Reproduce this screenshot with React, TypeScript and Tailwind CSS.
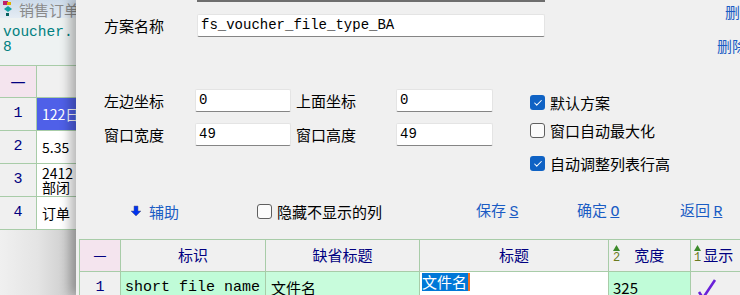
import { Check } from 'lucide-react';

const cjk = '[font-family:"Noto_Sans_CJK_SC","Noto_Sans",sans-serif]';
const mono = '[font-family:"Liberation_Mono","Noto_Sans_CJK_SC",monospace]';

function CheckBox({ checked, label }: { checked?: boolean; label: string }) {
	return (
		<div className="flex items-center gap-[5px]">
			{checked ? (
				<span className="w-[15px] h-[15px] rounded-[3px] bg-[#0f62c4] flex items-center justify-center">
					<Check className="w-[10px] h-[10px] text-white" strokeWidth={2.5} />
				</span>
			) : (
				<span className="w-[15px] h-[15px] rounded-[3px] border border-[#5f5f5f] bg-[#fbfbfb]" />
			)}
			<span className={`text-[15px] leading-none text-black whitespace-nowrap ${cjk}`}>{label}</span>
		</div>
	);
}

function Field({ value, w }: { value: string; w: string }) {
	return (
		<div
			className={`${w} shrink-0 h-[23px] bg-white border border-[#e4e4e4] border-b-[#858585] rounded-[2px] flex items-center px-[3px] text-[14px] text-black ${mono}`}
		>
			{value}
		</div>
	);
}

function Label({ text, w }: { text: string; w: string }) {
	return <span className={`${w} shrink-0 text-[15px] leading-none text-black ${cjk}`}>{text}</span>;
}

function LeftWindow() {
	const rows = [
		{ n: '1', t: '122日', sel: true },
		{ n: '2', t: '5.35' },
		{ n: '3', t: '2412\n部闭' },
		{ n: '4', t: '订单' },
	];
	return (
		<div className="w-[76px] shrink-0 h-full flex flex-col bg-[#f0f0f0]">
			<div className="h-[18px] shrink-0 bg-gradient-to-b from-[#cddbea] to-[#e4ecf4] flex items-center gap-[4px] pl-[1px] overflow-hidden">
				<svg width="14" height="16" viewBox="0 0 14 16" className="shrink-0">
					<rect x="2" y="0" width="5" height="4" fill="#c0206a" />
					<rect x="6" y="1" width="4" height="3" fill="#e0b000" />
					<path d="M3 8 L7 5 L11 8 L7 11 Z" fill="#10a0a0" />
					<rect x="5" y="12" width="3" height="3" fill="#0a6060" />
				</svg>
				<span className={`text-[15px] leading-none text-[#8a8a8a] whitespace-nowrap ${cjk}`}>销售订单</span>
			</div>
			<div className="h-[47px] shrink-0 bg-[#eef2f2] pt-[7px] pl-[3px] overflow-hidden">
				<div className={`text-[14.5px] leading-[15px] text-[#008080] whitespace-nowrap ${mono}`}>voucher.</div>
				<div className={`text-[14.5px] leading-[15px] text-[#008080] ${mono}`}>8</div>
			</div>
			<div className="border-t border-[#a8cca8] shrink-0">
				<div className="flex h-[32px] border-b border-[#a8cca8]">
					<div className="w-[37px] shrink-0 bg-[#f4e4ee] border-r border-[#a8cca8] flex items-center justify-center text-[#000080] text-[15px]">
						—
					</div>
					<div className="flex-1 bg-[#f0f0f0]" />
				</div>
				{rows.map(r => (
					<div key={r.n} className="flex h-[33px] border-b border-[#a8cca8]">
						<div className={`w-[37px] shrink-0 bg-[#f0f0f0] border-r border-[#a8cca8] flex items-center justify-center text-[#000080] text-[15px] ${mono}`}>
							{r.n}
						</div>
						<div
							className={`flex-1 overflow-hidden whitespace-pre pl-[5px] text-[14px] leading-[14px] flex items-center ${cjk} ${
								r.sel ? 'bg-[#4f60e8] text-white' : 'bg-white text-black'
							}`}
						>
							{r.t}
						</div>
					</div>
				))}
			</div>
			<div className="flex-1 bg-gradient-to-r from-[#f0f0f0] via-[#e4e4e4] to-[#c8c8c8]" />
		</div>
	);
}

function SortMark({ n }: { n: string }) {
	return (
		<div className="flex flex-col items-center leading-none -mt-[2px] shrink-0">
			<svg width="7" height="7" viewBox="0 0 7 7">
				<path d="M3.5 0 L7 6 L0 6 Z" fill="#3c8a2a" />
			</svg>
			<span className={`text-[12px] text-[#6a7a20] leading-[12px] ${mono}`}>{n}</span>
		</div>
	);
}

function Grid() {
	const line = 'shrink-0 border-r border-[#a8cca8]';
	return (
		<div className="ml-[3px] border-t border-l border-[#a8cca8] w-[700px]">
			<div className={`flex h-[32px] border-b border-[#a8cca8] bg-[#f0f0f0] text-[15px] text-[#000080] ${cjk}`}>
				<div className={`w-[41px] bg-[#f4e4ee] flex items-center justify-center ${line}`}>—</div>
				<div className={`w-[145px] flex items-center justify-center ${line}`}>标识</div>
				<div className={`w-[154px] flex items-center justify-center ${line}`}>缺省标题</div>
				<div className={`w-[189px] flex items-center justify-center ${line}`}>标题</div>
				<div className={`w-[82px] flex items-center gap-[14px] pl-[4px] ${line}`}>
					<SortMark n="2" />
					<span>宽度</span>
				</div>
				<div className="w-[80px] shrink-0 flex items-center gap-[2px] pl-[3px] whitespace-nowrap">
					<SortMark n="1" />
					<span>显示</span>
				</div>
			</div>
			<div className="flex h-[32px] text-[15px] text-black">
				<div className={`w-[41px] bg-[#f0f0f0] flex items-center justify-center text-[#000080] ${mono} ${line}`}>1</div>
				<div className={`w-[145px] bg-[#c0fcd8] flex items-center pl-[4px] whitespace-nowrap overflow-hidden ${mono} ${line}`}>
					short file name
				</div>
				<div className={`w-[154px] bg-[#c8fcdc] flex items-center pl-[5px] ${cjk} ${line}`}>文件名</div>
				<div className={`w-[189px] bg-white flex items-start pt-[1px] pl-[2px] ${cjk} ${line}`}>
					<span className="bg-[#0078d7] text-white leading-[18px] pr-[1px] border-r-2 border-[#f07020]">文件名</span>
				</div>
				<div className={`w-[82px] bg-[#c0fcd8] flex items-center pl-[4px] ${cjk} ${line}`}>325</div>
				<div className="w-[80px] shrink-0 bg-[#f0f0f0] flex items-center pl-[6px]">
					<svg width="20" height="22" viewBox="0 0 20 22">
						<path d="M2 15 L6 21 L18 3" stroke="#6a22d8" strokeWidth="2.6" fill="none" />
					</svg>
				</div>
			</div>
		</div>
	);
}

function Dialog() {
	const link = `text-[15px] leading-none text-[#1a5cc4] whitespace-nowrap shrink-0 ${cjk}`;
	return (
		<div className="relative flex-1 min-w-0 h-full bg-[#f0f0f0] shadow-[-6px_0_10px_rgba(0,0,0,0.28)] flex flex-col overflow-hidden">
			<div className="flex h-[80px] shrink-0">
				<div className="flex flex-col w-[641px] shrink-0">
					<div className="h-[2px] ml-[121px] w-[348px] bg-[#6e6e6e]" />
					<div className="flex items-center mt-[12px] ml-[28px]">
						<Label text="方案名称" w="w-[93px]" />
						<Field value="fs_voucher_file_type_BA" w="w-[348px]" />
					</div>
				</div>
				<div className="flex flex-col shrink-0">
					<span className={`${link} ml-[8px] mt-[4px]`}>删除</span>
					<span className={`${link} mt-[19px]`}>删除方案</span>
				</div>
			</div>
			<div className="flex mt-[9px] h-[105px] shrink-0">
				<div className="flex flex-col gap-[11px] ml-[28px] w-[426px] shrink-0">
					<div className="flex items-center">
						<Label text="左边坐标" w="w-[91px]" />
						<Field value="0" w="w-[96px]" />
						<span className="w-[5px] shrink-0" />
						<Label text="上面坐标" w="w-[100px]" />
						<Field value="0" w="w-[97px]" />
					</div>
					<div className="flex items-center">
						<Label text="窗口宽度" w="w-[91px]" />
						<Field value="49" w="w-[96px]" />
						<span className="w-[5px] shrink-0" />
						<Label text="窗口高度" w="w-[100px]" />
						<Field value="49" w="w-[97px]" />
					</div>
				</div>
				<div className="flex flex-col shrink-0">
					<div className="mt-[6px]">
						<CheckBox checked label="默认方案" />
					</div>
					<div className="mt-[13px]">
						<CheckBox label="窗口自动最大化" />
					</div>
					<div className="mt-[18px]">
						<CheckBox checked label="自动调整列表行高" />
					</div>
				</div>
			</div>
			<div className="flex items-center h-[30px] mt-[2px] shrink-0">
				<div className="flex items-center gap-[7px] ml-[54px] w-[127px] shrink-0">
					<svg width="12" height="12" viewBox="0 0 12 12">
						<path d="M4 1 H8 V6 H11 L6 11 L1 6 H4 Z" fill="#0033ee" stroke="#606080" strokeWidth="0.5" />
					</svg>
					<span className={link}>辅助</span>
				</div>
				<div className="w-[219px] shrink-0">
					<CheckBox label="隐藏不显示的列" />
				</div>
				<span className={`${link} w-[101px]`}>
					保存 <span className={`underline ${mono}`}>S</span>
				</span>
				<span className={`${link} w-[103px]`}>
					确定 <span className={`underline ${mono}`}>O</span>
				</span>
				<span className={link}>
					返回 <span className={`underline ${mono}`}>R</span>
				</span>
			</div>
			<div className="mt-[13px] shrink-0">
				<Grid />
			</div>
		</div>
	);
}

export default function App() {
	return (
		<div className="w-[740px] h-[295px] overflow-hidden flex bg-[#f0f0f0]">
			<LeftWindow />
			<Dialog />
		</div>
	);
}
